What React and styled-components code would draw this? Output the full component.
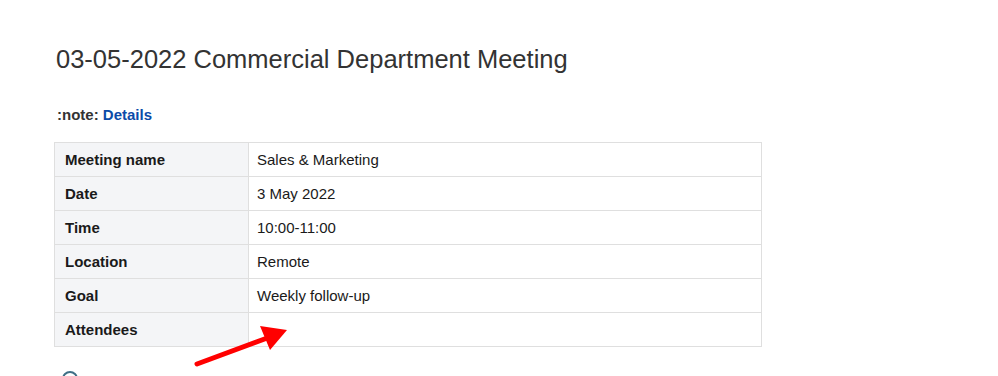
import React from "react";
import styled, { createGlobalStyle } from "styled-components";

const GlobalStyle = createGlobalStyle`
  html, body {
    margin: 0;
    padding: 0;
    background: #fff;
    overflow: hidden;
  }
  body {
    font-family: "Liberation Sans", Arial, sans-serif;
    color: #172b4d;
  }
`;

const Page = styled.div`
  position: relative;
  width: 998px;
  height: 376px;
  padding: 44px 0 0 54px;
  box-sizing: border-box;
  overflow: hidden;
`;

const Title = styled.h1`
  margin: 0 0 30px 2px;
  font-size: 25.5px;
  line-height: 31px;
  font-weight: 400;
  color: #333;
`;

const Note = styled.p`
  margin: 0 0 17px 3px;
  font-size: 15px;
  line-height: 20px;
  font-weight: 700;
  color: #333;

  a {
    color: #0b4ba8;
    text-decoration: none;
  }
`;

const Table = styled.table`
  width: 708px;
  border-collapse: collapse;
  font-size: 15px;
`;

const Cell = styled.td`
  height: 34px;
  box-sizing: border-box;
  padding: 0 ${(p) => (p.$head ? "10px" : "8px")};
  border: 1.5px solid #dfdfdf;
  background: ${(p) => (p.$head ? "#f4f5f7" : "#fff")};
  font-weight: ${(p) => (p.$head ? 700 : 400)};
  width: ${(p) => (p.$head ? "194px" : "auto")};
  vertical-align: middle;
  color: #1a1a1a;
`;

const Marker = styled.svg`
  position: absolute;
  left: 190px;
  top: 320px;
  overflow: visible;
`;

const Bullet = styled.span`
  display: block;
  margin: 24px 0 0 8px;
  width: 12px;
  height: 12px;
  border-radius: 50%;
  border: 2px solid #3f6f86;
`;

const rows = [
  ["Meeting name", "Sales & Marketing"],
  ["Date", "3 May 2022"],
  ["Time", "10:00-11:00"],
  ["Location", "Remote"],
  ["Goal", "Weekly follow-up"],
  ["Attendees", ""],
];

export default function App() {
  return (
    <>
      <GlobalStyle />
      <Page>
        <Title>03-05-2022 Commercial Department Meeting</Title>
        <Note>
          :note: <a href="#details">Details</a>
        </Note>
        <Table>
          <tbody>
            {rows.map(([label, value]) => (
              <tr key={label}>
                <Cell $head>{label}</Cell>
                <Cell>{value}</Cell>
              </tr>
            ))}
          </tbody>
        </Table>
        <Bullet />
        {/* red pointer towards the attendees cell */}
        <Marker width="110" height="50" viewBox="0 0 110 50">
          <line x1="7" y1="44" x2="80" y2="17" stroke="#ff0000" strokeWidth="5" strokeLinecap="round" />
          <polygon points="97,10 70,6 80,30" fill="#ff0000" />
        </Marker>
      </Page>
    </>
  );
}
